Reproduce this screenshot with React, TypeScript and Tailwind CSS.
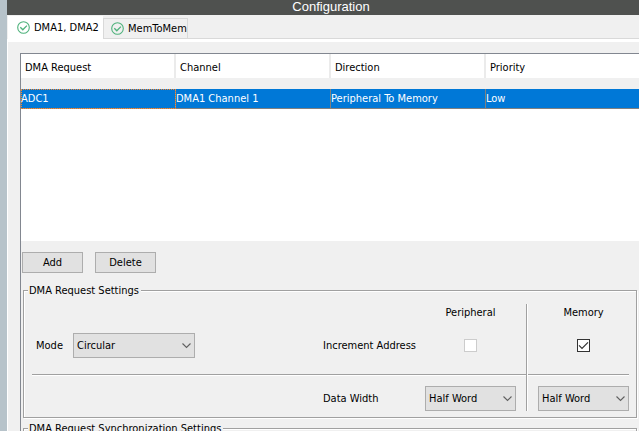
import { ReactNode } from "react";

const TABS = ["DMA1, DMA2", "MemToMem"];

const COLUMNS = ["DMA Request", "Channel", "Direction", "Priority"];

const REQUESTS = [["ADC1", "DMA1 Channel 1", "Peripheral To Memory", "Low"]];

function OkIcon() {
  return (
    <svg className="w-[13px] h-[13px] shrink-0" viewBox="0 0 13 13" fill="none" stroke="#4fb27c" aria-hidden="true">
      <circle cx="6.5" cy="6.5" r="5.8" strokeWidth={1.1} />
      <path d="M3.3 6.3l2.5 2.5 4.1-4.2" strokeWidth={1.3} />
    </svg>
  );
}

function PushButton({ children }: { children: ReactNode }) {
  return (
    <button type="button" className="w-[61px] h-[21px] border border-[#adadad] bg-[#e1e1e1] text-center">
      {children}
    </button>
  );
}

function Dropdown({ id, label, value, options, className }: {
  id: string;
  label?: string;
  value: string;
  options: string[];
  className: string;
}) {
  return (
    <div className={`relative h-[25px] ${className}`}>
      <select
        id={id}
        aria-label={label}
        defaultValue={value}
        className="appearance-none w-full h-full border border-[#adadad] bg-[#e1e1e1] pl-[3px] pr-4 rounded-none"
      >
        {options.map((option) => (
          <option key={option}>{option}</option>
        ))}
      </select>
      <svg
        className="absolute right-1 top-2 w-[9px] h-[9px] pointer-events-none"
        viewBox="0 0 9 9"
        fill="none"
        stroke="#606060"
        aria-hidden="true"
      >
        <path d="M0.5 2.5l4 4 4-4" strokeWidth={1.1} />
      </svg>
    </div>
  );
}

function CheckBox({ label, checked, disabled }: { label: string; checked?: boolean; disabled?: boolean }) {
  return (
    <span className="relative block w-[13px] h-[13px]">
      <input
        type="checkbox"
        aria-label={label}
        defaultChecked={checked}
        disabled={disabled}
        className="peer appearance-none block w-full h-full bg-white border border-[#333333] disabled:border-[#cccccc]"
      />
      <svg
        className="absolute inset-0 w-full h-full hidden peer-checked:block pointer-events-none"
        viewBox="0 0 13 13"
        fill="none"
        stroke="#333333"
        aria-hidden="true"
      >
        <path d="M2 6.3l3 3 6-6" strokeWidth={1.2} />
      </svg>
    </span>
  );
}

function Group({ title, children }: { title: string; children?: ReactNode }) {
  return (
    <fieldset className="min-w-0 border border-[#a0a0a0] pl-2 pr-[7px] pt-[7px] pb-[6px] shadow-[inset_1px_1px_0_#fff,1px_1px_0_#fff]">
      <legend className="-ml-1 pl-px pr-[2px] leading-[13px] bg-[#f0f0f0]">{title}</legend>
      {children}
    </fieldset>
  );
}

const WIDTHS = ["Byte", "Half Word", "Word"];

export default function App() {
  return (
    <div className="h-screen overflow-hidden flex bg-[#f0f0f0] font-['DejaVu_Sans_Condensed','Noto_Sans',sans-serif] text-[11px] leading-[14px] text-black">
      <div className="w-[7px] shrink-0 bg-[#b7c3ca]" />
      <main className="flex-1 min-w-0 flex flex-col">
        <h1 className="h-[15px] shrink-0 pl-4 bg-[#4f514f] text-white text-center text-[13px] leading-[14px] font-['Liberation_Sans',sans-serif]">
          Configuration
        </h1>

        <div role="tablist" className="h-[27px] shrink-0 flex items-start pt-px pl-px border-b-[3px] border-white">
          <button
            type="button"
            role="tab"
            aria-selected="true"
            className="flex items-center gap-1 w-[95px] h-[23px] pl-[9px] bg-white whitespace-nowrap"
          >
            <OkIcon />
            {TABS[0]}
          </button>
          <div className="flex-1 h-[23px] flex items-end border-b border-[#d9d9d9]">
            <button
              type="button"
              role="tab"
              aria-selected="false"
              className="flex items-center gap-1 w-[85px] h-5 pl-[7px] border border-b-0 border-[#d9d9d9] whitespace-nowrap"
            >
              <OkIcon />
              {TABS[1]}
            </button>
          </div>
        </div>

        <div className="flex-1 min-h-0 flex pl-3 pt-[11px] border-l border-white">
          <div className="flex-1 min-w-0 border-l border-t border-[#828790]">
            <div className="h-[187px] bg-white">
              <table className="w-full table-fixed border-separate border-spacing-0 text-left">
                <colgroup>
                  <col className="w-[155px]" />
                  <col className="w-[155px]" />
                  <col className="w-[155px]" />
                  <col />
                </colgroup>
                <thead>
                  <tr>
                    {COLUMNS.map((name) => (
                      <th key={name} className="h-6 pt-[3px] pb-0 pl-1 pr-0 font-normal border-r-2 border-[#ebebeb] last:border-r-0">
                        {name}
                      </th>
                    ))}
                  </tr>
                  <tr aria-hidden="true">
                    <td colSpan={4} className="h-[11px] p-0 bg-[#f0f0f0]" />
                  </tr>
                </thead>
                <tbody>
                  {REQUESTS.map((row) => (
                    <tr key={row[0]} className="bg-[#0078d7] text-white">
                      {row.map((cell) => (
                        <td
                          key={cell}
                          className="h-5 p-0 border-r border-b border-[#808080] whitespace-nowrap first:outline-dotted first:outline-1 first:-outline-offset-1 first:outline-[#ff8728] last:border-r-0"
                        >
                          {cell}
                        </td>
                      ))}
                    </tr>
                  ))}
                </tbody>
              </table>
            </div>

            <div className="flex gap-3 pl-px pt-[11px] pb-[11px]">
              <PushButton>Add</PushButton>
              <PushButton>Delete</PushButton>
            </div>

            <div className="flex flex-col gap-1 pl-[2px] pr-[2px]">
              <Group title="DMA Request Settings">
                <div className="flex">
                  <div className="flex-1 min-w-0">
                    <div className="grid content-start grid-cols-[1fr_102px_101px] h-[71px] border-b border-[#a0a0a0] shadow-[0_1px_0_#fff]">
                      <div className="col-start-3 w-[91px] leading-[17px] text-center">Peripheral</div>
                      <div className="col-start-1 h-[49px] pl-1 flex items-center gap-[10px]">
                        <label htmlFor="mode">Mode</label>
                        <Dropdown id="mode" value="Circular" options={["Normal", "Circular"]} className="w-[122px]" />
                      </div>
                      <div className="h-[49px] flex items-center">Increment Address</div>
                      <div className="w-[91px] h-[49px] flex items-center justify-center">
                        <CheckBox label="Peripheral increment address" disabled />
                      </div>
                    </div>
                    <div className="grid grid-cols-[1fr_102px_101px] pt-[11px] items-center">
                      <label htmlFor="peripheral-width" className="col-start-2">Data Width</label>
                      <Dropdown id="peripheral-width" value="Half Word" options={WIDTHS} className="w-[91px]" />
                    </div>
                  </div>
                  <div className="border-l border-[#a0a0a0] shadow-[inset_1px_0_0_#fff] pl-px">
                    <div className="h-[71px] pl-[10px] border-b border-[#a0a0a0] shadow-[0_1px_0_#fff]">
                      <div className="leading-[17px] text-center">Memory</div>
                      <div className="h-[49px] flex items-center justify-center">
                        <CheckBox label="Memory increment address" checked />
                      </div>
                    </div>
                    <div className="pt-[11px] pl-[10px]">
                      <Dropdown
                        id="memory-width"
                        label="Memory data width"
                        value="Half Word"
                        options={WIDTHS}
                        className="w-[91px]"
                      />
                    </div>
                  </div>
                </div>
              </Group>
              <Group title="DMA Request Synchronization Settings" />
            </div>
          </div>
        </div>
      </main>
    </div>
  );
}
